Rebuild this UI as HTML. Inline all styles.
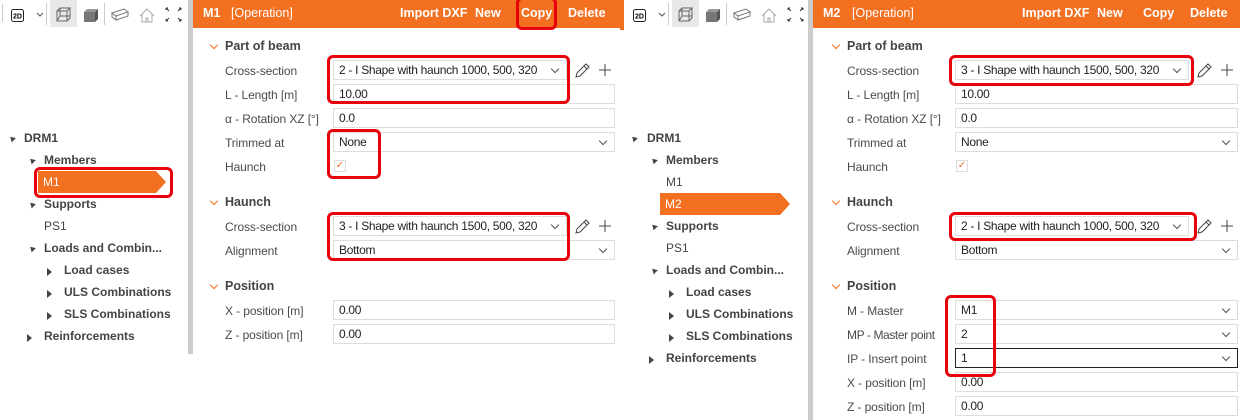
<!DOCTYPE html>
<html><head><meta charset="utf-8"><style>
*{margin:0;padding:0;box-sizing:border-box}
body{width:1240px;height:420px;position:relative;background:#fff;font-family:"Liberation Sans",sans-serif;font-size:12px;color:#333;overflow:hidden}
.a{position:absolute;white-space:nowrap}
.hdr{position:absolute;top:0;height:28px;background:#f37021;color:#fff;font-weight:bold;font-size:12.5px}
.hdr span{position:absolute;top:6px}
.sec{font-weight:bold;font-size:12.5px;color:#444}
.chev{position:absolute;width:6px;height:6px;border-right:1.3px solid #f37021;border-bottom:1.3px solid #f37021;transform:rotate(45deg)}
.inp{position:absolute;height:20px;border:1px solid #ddd;background:#fff;padding:2px 5px;font-size:12px;color:#222;letter-spacing:-0.3px;white-space:nowrap}
.dd:after{content:"";position:absolute;right:8px;top:5px;width:5px;height:5px;border-right:1px solid #555;border-bottom:1px solid #555;transform:rotate(45deg)}
.lbl{position:absolute;color:#4a4a4a;font-size:12px;white-space:nowrap;letter-spacing:-0.1px}
.tr{position:absolute;font-size:12px;color:#444;white-space:nowrap}
.b{font-weight:bold}
.tri{position:absolute;width:0;height:0}
.td{border-left:3px solid transparent;border-right:3px solid transparent;border-top:0;border-bottom:5px solid #444;transform:rotate(-45deg)}
.tr2{border-top:4px solid transparent;border-bottom:4px solid transparent;border-left:5px solid #444}
.red{position:absolute;border:3px solid #e8000b;border-radius:6px}
.sel{position:absolute;height:22px;background:#f37021;color:#fff;padding:4px 5px}
.sel:after{content:"";position:absolute;right:-10px;top:0;border-top:11px solid transparent;border-bottom:11px solid transparent;border-left:10px solid #f37021}
.divd{position:absolute;background:#ccc;width:5px}
.cb{position:absolute;width:12px;height:12px;border:1px solid #ddd;color:#f37021;font-size:10px;line-height:10px;text-align:center}
</style></head><body>

<svg class="a" style="left:0;top:0" width="190" height="28" viewBox="0 0 190 28">
<line x1="2.5" y1="4" x2="2.5" y2="22" stroke="#ccc"/>
<rect x="11.5" y="9.5" width="12" height="12" rx="2" fill="none" stroke="#222"/>
<text x="17.5" y="18.5" font-size="7" text-anchor="middle" font-family="Liberation Sans" font-weight="bold">2D</text>
<path d="M37 13 l3 3 l3 -3" fill="none" stroke="#555"/>
<line x1="46.5" y1="3" x2="46.5" y2="25" stroke="#ccc"/>
<rect x="50" y="0" width="27" height="27" fill="#e8e8e8"/>
<path d="M57 11 h10 v10 h-10z M57 11 l3 -3 h10 l-3 3 M70 8 v10 l-3 3 M60 8 v8 h10 M60 16 l-3 5" fill="none" stroke="#666"/>
<path d="M84 12 h11 v10 h-11z" fill="#777"/><path d="M84 12 l3 -3 h11 l-3 3z" fill="#999"/><path d="M95 12 l3 -3 v10 l-3 3z" fill="#555"/>
<line x1="104.5" y1="3" x2="104.5" y2="25" stroke="#ccc"/>
<path d="M112 13 l12 -4 l4 3 l-12 4z M112 13 v4 l4 3 v-4 M116 20 l12 -4 v-4" fill="none" stroke="#777"/>
<path d="M140 16 l7 -7 l7 7 M142 14 v8 h10 v-8 M146 22 v-4 h2 v4" fill="none" stroke="#aaa"/>
<path d="M166 8 l3 3 M166 8 h2 M166 8 v2 M181 8 l-3 3 M181 8 h-2 M181 8 v2 M166 21 l3 -3 M166 21 h2 M166 21 v-2 M181 21 l-3 -3 M181 21 h-2 M181 21 v-2" fill="none" stroke="#333"/>
</svg>
<div class="divd" style="left:188px;top:0;height:354px"></div>

<div class="tri td" style="left:9px;top:136px"></div><div class="tr b" style="left:24px;top:131px">DRM1</div>
<div class="tri td" style="left:29px;top:158px"></div><div class="tr b" style="left:44px;top:153px">Members</div>
<div class="sel" style="left:38px;top:171px;width:118px">M1</div>
<div class="tri td" style="left:29px;top:202px"></div><div class="tr b" style="left:44px;top:197px">Supports</div>
<div class="tr" style="left:44px;top:219px">PS1</div>
<div class="tri td" style="left:29px;top:246px"></div><div class="tr b" style="left:44px;top:241px">Loads and Combin...</div>
<div class="tri tr2" style="left:47px;top:268px"></div><div class="tr b" style="left:64px;top:263px">Load cases</div>
<div class="tri tr2" style="left:47px;top:290px"></div><div class="tr b" style="left:64px;top:285px">ULS Combinations</div>
<div class="tri tr2" style="left:47px;top:312px"></div><div class="tr b" style="left:64px;top:307px">SLS Combinations</div>
<div class="tri tr2" style="left:27px;top:334px"></div><div class="tr b" style="left:44px;top:329px">Reinforcements</div>

<div class="hdr" style="left:193px;width:427px"><span style="left:10px">M1</span><span style="left:38px;font-weight:normal">[Operation]</span><span style="left:207px">Import DXF</span><span style="left:282px">New</span><span style="left:328px">Copy</span><span style="left:375px">Delete</span></div>
<div class="chev" style="left:211px;top:42px"></div><div class="a sec" style="left:225px;top:39px">Part of beam</div>
<div class="lbl" style="left:225px;top:64px">Cross-section</div><div class="inp dd" style="left:333px;top:60px;width:234px">2 - I Shape with haunch 1000, 500, 320</div>
<div class="lbl" style="left:225px;top:88px">L - Length [m]</div><div class="inp" style="left:333px;top:84px;width:282px">10.00</div>
<div class="lbl" style="left:225px;top:112px">α - Rotation XZ [°]</div><div class="inp" style="left:333px;top:108px;width:282px">0.0</div>
<div class="lbl" style="left:225px;top:136px">Trimmed at</div><div class="inp dd" style="left:333px;top:132px;width:282px">None</div>
<div class="lbl" style="left:225px;top:160px">Haunch</div><div class="cb" style="left:334px;top:160px">✓</div>
<div class="chev" style="left:211px;top:198px"></div><div class="a sec" style="left:225px;top:195px">Haunch</div>
<div class="lbl" style="left:225px;top:220px">Cross-section</div><div class="inp dd" style="left:333px;top:216px;width:234px">3 - I Shape with haunch 1500, 500, 320</div>
<div class="lbl" style="left:225px;top:244px">Alignment</div><div class="inp dd" style="left:333px;top:240px;width:282px">Bottom</div>
<div class="chev" style="left:211px;top:282px"></div><div class="a sec" style="left:225px;top:279px">Position</div>
<div class="lbl" style="left:225px;top:304px">X - position [m]</div><div class="inp" style="left:333px;top:300px;width:282px">0.00</div>
<div class="lbl" style="left:225px;top:328px">Z - position [m]</div><div class="inp" style="left:333px;top:324px;width:282px">0.00</div>
<svg class="a" style="left:572px;top:60px" width="44" height="20"><path d="M4 17 l1 -4 l9 -9 l3 3 l-9 9z M12 6 l3 3" fill="none" stroke="#444"/><path d="M33 4 v12 M27 10 h12" stroke="#444"/></svg>
<svg class="a" style="left:572px;top:216px" width="44" height="20"><path d="M4 17 l1 -4 l9 -9 l3 3 l-9 9z M12 6 l3 3" fill="none" stroke="#444"/><path d="M33 4 v12 M27 10 h12" stroke="#444"/></svg>

<div class="a" style="left:620px;top:0;width:4px;height:30px;background:#f37021"></div>
<svg class="a" style="left:622px;top:0" width="190" height="28" viewBox="0 0 190 28">
<rect x="11.5" y="9.5" width="12" height="12" rx="2" fill="none" stroke="#222"/>
<text x="17.5" y="18.5" font-size="7" text-anchor="middle" font-family="Liberation Sans" font-weight="bold">2D</text>
<path d="M37 13 l3 3 l3 -3" fill="none" stroke="#555"/>
<line x1="46.5" y1="3" x2="46.5" y2="25" stroke="#ccc"/>
<rect x="50" y="0" width="27" height="27" fill="#e8e8e8"/>
<path d="M57 11 h10 v10 h-10z M57 11 l3 -3 h10 l-3 3 M70 8 v10 l-3 3 M60 8 v8 h10 M60 16 l-3 5" fill="none" stroke="#666"/>
<path d="M84 12 h11 v10 h-11z" fill="#777"/><path d="M84 12 l3 -3 h11 l-3 3z" fill="#999"/><path d="M95 12 l3 -3 v10 l-3 3z" fill="#555"/>
<line x1="104.5" y1="3" x2="104.5" y2="25" stroke="#ccc"/>
<path d="M112 13 l12 -4 l4 3 l-12 4z M112 13 v4 l4 3 v-4 M116 20 l12 -4 v-4" fill="none" stroke="#777"/>
<path d="M140 16 l7 -7 l7 7 M142 14 v8 h10 v-8 M146 22 v-4 h2 v4" fill="none" stroke="#aaa"/>
<path d="M166 8 l3 3 M166 8 h2 M166 8 v2 M181 8 l-3 3 M181 8 h-2 M181 8 v2 M166 21 l3 -3 M166 21 h2 M166 21 v-2 M181 21 l-3 -3 M181 21 h-2 M181 21 v-2" fill="none" stroke="#333"/>
</svg>
<div class="divd" style="left:808px;top:0;height:420px"></div>

<div class="tri td" style="left:631px;top:136px"></div><div class="tr b" style="left:647px;top:131px">DRM1</div>
<div class="tri td" style="left:651px;top:158px"></div><div class="tr b" style="left:666px;top:153px">Members</div>
<div class="tr" style="left:666px;top:175px">M1</div>
<div class="sel" style="left:660px;top:193px;width:120px">M2</div>
<div class="tri td" style="left:651px;top:224px"></div><div class="tr b" style="left:666px;top:219px">Supports</div>
<div class="tr" style="left:666px;top:241px">PS1</div>
<div class="tri td" style="left:651px;top:268px"></div><div class="tr b" style="left:666px;top:263px">Loads and Combin...</div>
<div class="tri tr2" style="left:669px;top:290px"></div><div class="tr b" style="left:686px;top:285px">Load cases</div>
<div class="tri tr2" style="left:669px;top:312px"></div><div class="tr b" style="left:686px;top:307px">ULS Combinations</div>
<div class="tri tr2" style="left:669px;top:334px"></div><div class="tr b" style="left:686px;top:329px">SLS Combinations</div>
<div class="tri tr2" style="left:649px;top:356px"></div><div class="tr b" style="left:666px;top:351px">Reinforcements</div>

<div class="hdr" style="left:813px;width:427px"><span style="left:10px">M2</span><span style="left:39px;font-weight:normal">[Operation]</span><span style="left:209px">Import DXF</span><span style="left:284px">New</span><span style="left:330px">Copy</span><span style="left:377px">Delete</span></div>
<div class="chev" style="left:833px;top:42px"></div><div class="a sec" style="left:847px;top:39px">Part of beam</div>
<div class="lbl" style="left:847px;top:64px">Cross-section</div><div class="inp dd" style="left:955px;top:60px;width:234px">3 - I Shape with haunch 1500, 500, 320</div>
<div class="lbl" style="left:847px;top:88px">L - Length [m]</div><div class="inp" style="left:955px;top:84px;width:283px">10.00</div>
<div class="lbl" style="left:847px;top:112px">α - Rotation XZ [°]</div><div class="inp" style="left:955px;top:108px;width:283px">0.0</div>
<div class="lbl" style="left:847px;top:136px">Trimmed at</div><div class="inp dd" style="left:955px;top:132px;width:283px">None</div>
<div class="lbl" style="left:847px;top:160px">Haunch</div><div class="cb" style="left:956px;top:160px">✓</div>
<div class="chev" style="left:833px;top:198px"></div><div class="a sec" style="left:847px;top:195px">Haunch</div>
<div class="lbl" style="left:847px;top:220px">Cross-section</div><div class="inp dd" style="left:955px;top:216px;width:234px">2 - I Shape with haunch 1000, 500, 320</div>
<div class="lbl" style="left:847px;top:244px">Alignment</div><div class="inp dd" style="left:955px;top:240px;width:283px">Bottom</div>
<div class="chev" style="left:833px;top:282px"></div><div class="a sec" style="left:847px;top:279px">Position</div>
<div class="lbl" style="left:847px;top:304px">M - Master</div><div class="inp dd" style="left:955px;top:300px;width:283px">M1</div>
<div class="lbl" style="left:847px;top:328px;letter-spacing:-0.4px">MP - Master point</div><div class="inp dd" style="left:955px;top:324px;width:283px">2</div>
<div class="lbl" style="left:847px;top:352px">IP - Insert point</div><div class="inp dd" style="left:955px;top:348px;width:283px;border-color:#222">1</div>
<div class="lbl" style="left:847px;top:376px">X - position [m]</div><div class="inp" style="left:955px;top:372px;width:283px">0.00</div>
<div class="lbl" style="left:847px;top:400px">Z - position [m]</div><div class="inp" style="left:955px;top:396px;width:283px">0.00</div>
<svg class="a" style="left:1194px;top:60px" width="44" height="20"><path d="M4 17 l1 -4 l9 -9 l3 3 l-9 9z M12 6 l3 3" fill="none" stroke="#444"/><path d="M33 4 v12 M27 10 h12" stroke="#444"/></svg>
<svg class="a" style="left:1194px;top:216px" width="44" height="20"><path d="M4 17 l1 -4 l9 -9 l3 3 l-9 9z M12 6 l3 3" fill="none" stroke="#444"/><path d="M33 4 v12 M27 10 h12" stroke="#444"/></svg>

<div class="red" style="left:516px;top:-3px;width:41px;height:33px"></div>
<div class="red" style="left:327px;top:55px;width:243px;height:49px"></div>
<div class="red" style="left:327px;top:129px;width:54px;height:50px"></div>
<div class="red" style="left:34px;top:167px;width:139px;height:31px"></div>
<div class="red" style="left:327px;top:212px;width:243px;height:49px"></div>
<div class="red" style="left:949px;top:55px;width:245px;height:31px"></div>
<div class="red" style="left:949px;top:212px;width:248px;height:29px"></div>
<div class="red" style="left:945px;top:295px;width:51px;height:82px"></div>
</body></html>
